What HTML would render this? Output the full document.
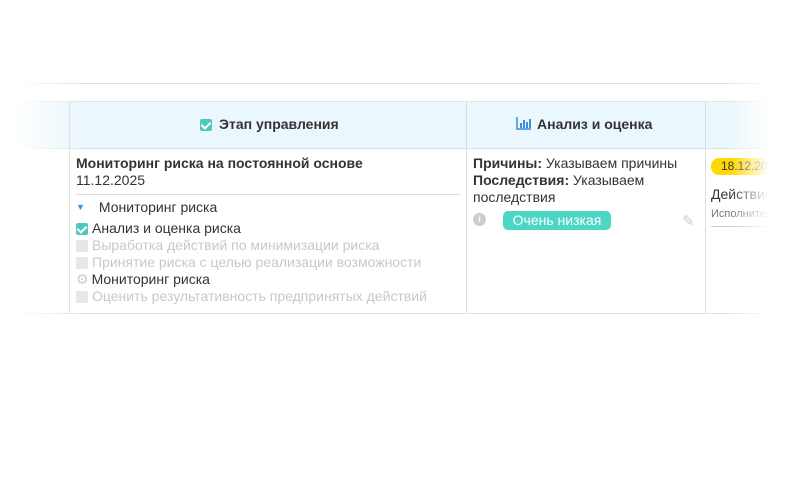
<!DOCTYPE html>
<html><head><meta charset="utf-8"><style>
body{margin:0;width:800px;height:500px;background:#fff;position:relative;overflow:hidden;font-family:"Liberation Sans","Noto Sans CJK SC",sans-serif;color:#333;font-size:14px}
.a{position:absolute}
.cb{display:inline-block;width:12px;height:12px;border-radius:2px;background:#e6e6e6;vertical-align:-2px;margin-right:4px;position:relative}
.ck{background:#4cc9bd}
.ck:after{content:"";position:absolute;left:3px;top:1px;width:4px;height:7px;border:solid #fff;border-width:0 2px 2px 0;transform:rotate(45deg)}
.g{color:#c8c8c8}
</style></head><body>
<div class="a" style="left:0;top:83px;width:760px;height:1px;background:#e2e2e2"></div>
<div class="a" style="left:0;top:101px;width:800px;height:46px;background:#eaf7fc;border-top:1px solid #dde6ea;border-bottom:1px solid #dde3e6"></div>
<div class="a" style="left:69px;top:101px;width:1px;height:212px;background:#ddd"></div>
<div class="a" style="left:466px;top:101px;width:1px;height:212px;background:#ddd"></div>
<div class="a" style="left:705px;top:101px;width:1px;height:212px;background:#ddd"></div>
<div class="a" style="left:0;top:313px;width:760px;height:1px;background:#e2e2e2"></div>
<div class="a" style="left:200px;top:116px;font-weight:bold;font-size:14px;color:#333"><span class="cb ck" style="margin-right:7px"></span>Этап управления</div>
<div class="a" style="left:516px;top:116px;font-weight:bold;font-size:14px"><svg width="15" height="13" viewBox="0 0 15 13" style="vertical-align:-1px;margin-right:6px"><path d="M1 0V12H15" stroke="#3a8fd8" stroke-width="1.5" fill="none"/><rect x="4" y="6" width="2" height="5" fill="#3a8fd8"/><rect x="7" y="3" width="2" height="8" fill="#3a8fd8"/><rect x="10" y="5" width="2" height="6" fill="#3a8fd8"/><rect x="13" y="2" width="2" height="9" fill="#3a8fd8"/></svg>Анализ и оценка</div>
<div class="a" style="left:76px;top:155px;line-height:17px">
<b>Мониторинг риска на постоянной основе</b><br>11.12.2025</div>
<div class="a" style="left:76px;top:194px;width:384px;height:1px;background:#ddd"></div>
<div class="a" style="left:76px;top:199px;line-height:17px">
<div><span style="color:#3a8fd8;font-size:9px;margin-right:14px;vertical-align:2px">▼</span>Мониторинг риска</div>
<div style="margin-top:4px"><span class="cb ck"></span>Анализ и оценка риска</div>
<div class="g"><span class="cb"></span>Выработка действий по минимизации риска</div>
<div class="g"><span class="cb"></span>Принятие риска с целью реализации возможности</div>
<div><span style="color:#ccc;margin-right:3px">⚙</span>Мониторинг риска</div>
<div class="g"><span class="cb"></span>Оценить результативность предпринятых действий</div>
</div>
<div class="a" style="left:473px;top:155px;line-height:17px;width:220px"><b>Причины:</b> Указываем причины<br><b>Последствия:</b> Указываем последствия</div>
<div class="a" style="left:473px;top:213px;width:13px;height:13px;border-radius:50%;background:#ccc;color:#fff;font-size:9px;text-align:center;line-height:13px;font-weight:bold">i</div>
<div class="a" style="left:503px;top:211px;width:108px;height:19px;border-radius:5px;background:#4dd6c6;color:#fff;text-align:center;line-height:19px">Очень низкая</div>
<div class="a" style="left:682px;top:212px;color:#ccc;font-size:15px">✎</div>
<div class="a" style="left:711px;top:158px;width:70px;height:17px;border-radius:8px;background:#ffd800;font-size:12px;line-height:17px;padding-left:10px">18.12.2025</div>
<div class="a" style="left:711px;top:186px">Действие</div>
<div class="a" style="left:711px;top:208px;font-size:11px;color:#777">Исполнитель</div>
<div class="a" style="left:711px;top:226px;width:90px;height:1px;background:#ccc"></div>
<div class="a" style="left:0;top:0;width:80px;height:500px;background:linear-gradient(90deg,#fff 20%,rgba(255,255,255,0))"></div>
<div class="a" style="left:730px;top:0;width:70px;height:500px;background:linear-gradient(90deg,rgba(255,255,255,0),#fff 55%)"></div>
</body></html>
